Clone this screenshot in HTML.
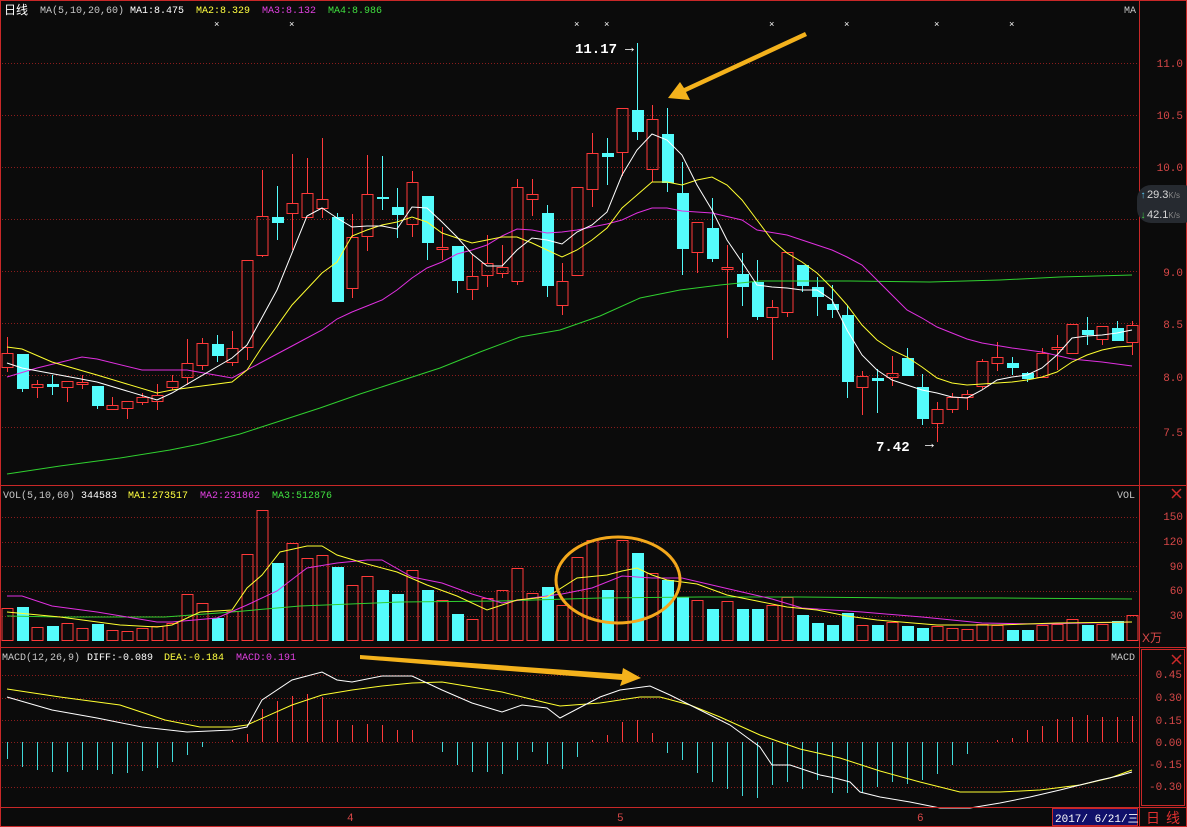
<!DOCTYPE html>
<html><head><meta charset="utf-8">
<style>
html,body{margin:0;padding:0;background:#0b0b0b;width:1187px;height:827px;overflow:hidden}
svg{display:block}
</style></head><body>
<svg id="s" width="1187" height="827" xmlns="http://www.w3.org/2000/svg" font-family="'Liberation Mono','Noto Sans CJK SC',monospace" font-size="10">
<rect x="0" y="0" width="1187" height="827" fill="#0b0b0b"/>
<g id="grid"></g>
<g id="content"></g>
<g stroke="#c82828" stroke-width="1" fill="none">
<rect x="0.5" y="0.5" width="1186" height="826"/>
<line x1="0" y1="485.5" x2="1187" y2="485.5"/>
<line x1="0" y1="647.5" x2="1187" y2="647.5"/>
<line x1="0" y1="807.5" x2="1187" y2="807.5"/>
<line x1="1139.5" y1="0" x2="1139.5" y2="827"/>
<rect x="1141.5" y="649.5" width="43" height="156"/>
</g>
<g fill="#cc2a2a" stroke="#cc2a2a" stroke-width="1.5">
<line x1="1172" y1="489" x2="1181" y2="498"/><line x1="1181" y1="489" x2="1172" y2="498"/>
<line x1="1172" y1="655" x2="1181" y2="664"/><line x1="1181" y1="655" x2="1172" y2="664"/>
</g>
<text x="4" y="14" fill="#fff" font-family="'Noto Sans CJK SC',sans-serif" font-size="12">日线</text>
<text x="40" y="13" fill="#c8c8c8">MA(5,10,20,60)</text>
<text x="130" y="13" fill="#fff">MA1:8.475</text>
<text x="196" y="13" fill="#ffff40">MA2:8.329</text>
<text x="262" y="13" fill="#e040e0">MA3:8.132</text>
<text x="328" y="13" fill="#40e040">MA4:8.986</text>
<text x="1124" y="13" fill="#c8c8c8">MA</text>
<text x="3" y="498" fill="#c8c8c8">VOL(5,10,60)</text>
<text x="81" y="498" fill="#fff">344583</text>
<text x="128" y="498" fill="#ffff40">MA1:273517</text>
<text x="200" y="498" fill="#e040e0">MA2:231862</text>
<text x="272" y="498" fill="#40e040">MA3:512876</text>
<text x="1117" y="498" fill="#c8c8c8">VOL</text>
<text x="2" y="660" fill="#c8c8c8">MACD(12,26,9)</text>
<text x="87" y="660" fill="#fff">DIFF:-0.089</text>
<text x="164" y="660" fill="#ffff40">DEA:-0.184</text>
<text x="236" y="660" fill="#e040e0">MACD:0.191</text>
<text x="1111" y="660" fill="#c8c8c8">MACD</text>
<g fill="#fff" font-size="9"><text x="214" y="27">×</text><text x="289" y="27">×</text><text x="574" y="27">×</text><text x="604" y="27">×</text><text x="769" y="27">×</text><text x="844" y="27">×</text><text x="934" y="27">×</text><text x="1009" y="27">×</text></g>
<g fill="#d84848" font-size="11" text-anchor="end">
<text x="1183" y="67">11.0</text><text x="1183" y="119">10.5</text><text x="1183" y="171">10.0</text>
<text x="1183" y="276">9.0</text><text x="1183" y="328">8.5</text><text x="1183" y="381">8.0</text><text x="1183" y="436">7.5</text>
<text x="1183" y="520">150</text><text x="1183" y="545">120</text><text x="1183" y="570">90</text><text x="1183" y="594">60</text><text x="1183" y="619">30</text>
<text x="1182" y="678">0.45</text><text x="1182" y="701">0.30</text><text x="1182" y="724">0.15</text><text x="1182" y="746">0.00</text><text x="1182" y="768">-0.15</text><text x="1182" y="790">-0.30</text>
</g>
<text x="1142" y="642" fill="#d84848" font-family="'Liberation Sans','Noto Sans CJK SC',sans-serif" font-size="12">X万</text>
<g fill="#d84848" font-size="11"><text x="347" y="821">4</text><text x="617" y="821">5</text><text x="917" y="821">6</text></g>
<rect x="1052.5" y="808.5" width="85" height="17" fill="#10106a" stroke="#c82828"/>
<text x="1055" y="822" fill="#fff" font-size="11">2017/ 6/21/三</text>
<text x="1146" y="823" fill="#e03030" font-family="'Noto Sans CJK SC',sans-serif" font-size="14" letter-spacing="6">日线</text>
<rect x="1137" y="185" width="60" height="38" rx="14" fill="#262a30"/>
<text x="1147" y="198" fill="#d8d8d8" font-size="11" font-family="'Liberation Sans',sans-serif">29.3<tspan font-size="8" fill="#888">K/s</tspan></text>
<text x="1147" y="218" fill="#d8d8d8" font-size="11" font-family="'Liberation Sans',sans-serif">42.1<tspan font-size="8" fill="#888">K/s</tspan></text>
<text x="1140" y="198" fill="#5ac8f0" font-size="10">↑</text>
<text x="1140" y="218" fill="#40d040" font-size="10">↓</text>
<text x="575" y="53" fill="#fff" font-size="14" font-weight="bold">11.17</text>
<text x="625" y="52" fill="#fff" font-size="15">→</text>
<text x="876" y="451" fill="#fff" font-size="14" font-weight="bold">7.42</text>
<text x="925" y="448" fill="#fff" font-size="15">→</text>
<g id="ann"></g>
</svg>
<script>
var NS="http://www.w3.org/2000/svg";
function el(p,t,a){var e=document.createElementNS(NS,t);for(var k in a)e.setAttribute(k,a[k]);document.getElementById(p).appendChild(e);return e;}
[63,115,167,219,271,323,375,427,517,542,566,591,616,675,698,720,742,765,787].forEach(function(y){
 el("grid","line",{x1:2,x2:1138,y1:y+.5,y2:y+.5,stroke:"#8a1c1c","stroke-dasharray":"1,2"});});
var C=[[1,353,367,337,372],[0,354,389,354,392],[1,384,387,380,398],[0,384,387,375,395],[1,381,387,381,402],[1,382,384,375,389],[0,386,406,386,409],[1,405,409,397,410],[1,401,408,401,419],[1,397,402,393,405],[1,395,401,384,410],[1,381,387,375,390],[1,363,377,339,385],[1,343,365,338,370],[0,344,356,335,362],[1,348,362,331,366],[1,260,347,260,360],[1,216,255,170,257],[0,217,223,186,240],[1,203,213,154,250],[1,193,217,158,217],[1,199,208,138,218],[0,217,302,213,302],[1,237,288,214,298],[1,194,236,155,251],[0,197,199,156,210],[0,207,215,188,238],[1,182,224,171,237],[0,196,243,196,260],[1,247,249,227,260],[0,246,281,246,293],[1,276,289,255,300],[1,263,275,235,287],[1,267,273,245,278],[1,187,281,179,285],[1,194,199,179,216],[0,213,286,205,297],[1,281,305,263,315],[1,187,275,187,275],[1,153,189,133,207],[0,153,157,138,185],[1,108,152,108,176],[0,110,132,43,140],[1,119,169,105,182],[0,134,183,108,192],[0,193,249,162,275],[1,222,252,222,273],[0,228,259,198,262],[1,267,269,245,338],[0,274,287,253,306],[0,282,317,260,320],[1,307,317,300,360],[1,252,312,252,317],[0,265,286,265,292],[0,287,297,277,316],[0,304,310,285,318],[0,315,382,305,398],[1,376,387,371,415],[0,378,381,369,413],[1,373,377,356,386],[0,358,376,348,376],[0,387,419,374,425],[1,409,423,402,442],[1,397,409,393,413],[1,394,397,390,410],[1,361,386,359,389],[1,357,363,342,371],[0,363,368,357,375],[0,373,379,372,382],[1,353,377,348,377],[1,347,349,335,370],[1,324,353,324,353],[0,330,335,317,345],[1,326,339,326,345],[0,328,341,321,341],[1,325,342,321,355]];
var RED="#ff3a3a",CY="#54fcfc";
C.forEach(function(c,i){var x=7+15*i;var col=c[0]?RED:CY;
 if(c[0]){
  el("content","line",{x1:x+.5,x2:x+.5,y1:c[3],y2:c[1],stroke:col});
  el("content","line",{x1:x+.5,x2:x+.5,y1:c[2],y2:c[4],stroke:col});
  el("content","rect",{x:x-5,y:c[1]+.5,width:11,height:Math.max(c[2]-c[1],1),fill:"none",stroke:col});
 } else {
  el("content","line",{x1:x+.5,x2:x+.5,y1:c[3],y2:c[4],stroke:col});
  el("content","rect",{x:x-5,y:c[1],width:12,height:Math.max(c[2]-c[1],2),fill:col});
 }});
function pl(pts,col){el("content","polyline",{points:pts,fill:"none",stroke:col,"stroke-width":1});}
pl("7,474 60,466 120,458 170,450 200,444 240,434 280,421 320,408 360,394 400,381 440,368 480,352 520,337 560,330 600,316 640,298 680,290 720,285 760,281 800,281 850,281 930,282 1000,280 1060,277 1132,275","#30d030");
pl("7,377 37,368 82,357 97,359 142,370 187,370 232,378 262,362 292,346 322,330 337,319 352,312 367,306 382,300 397,290 412,278 427,268 442,262 457,254 472,250 487,245 502,236 517,229 532,230 547,233 562,232 577,230 592,227 607,224 622,220 637,213 652,208 667,208 682,211 712,213 742,220 757,230 787,235 802,240 817,245 832,250 847,257 862,265 877,280 892,295 907,310 922,318 937,327 952,333 967,339 982,343 1012,348 1042,352 1072,359 1102,362 1132,366","#e030e0");
pl("7,347 22,349 52,362 97,375 157,393 172,390 232,382 247,370 262,347 292,305 322,273 337,262 352,236 367,230 382,225 397,222 412,217 427,222 442,233 457,238 472,243 487,240 502,237 517,237 532,243 547,250 562,257 577,250 592,240 607,228 622,208 637,195 652,182 667,182 682,185 697,180 712,177 727,185 742,200 757,220 772,240 787,253 802,262 817,273 832,288 847,305 862,325 877,340 892,350 907,357 922,367 937,378 952,383 967,385 982,384 997,383 1012,382 1027,380 1042,377 1057,372 1072,362 1087,355 1102,350 1117,347 1132,346","#ffff30");
pl("7,363 22,368 97,382 157,400 172,393 232,358 247,345 277,290 307,216 322,208 337,218 352,227 367,226 382,226 397,229 412,207 427,208 442,222 457,237 472,254 487,266 502,266 517,250 532,238 547,240 562,244 577,232 592,225 607,212 622,175 637,150 652,134 667,140 682,155 697,185 712,210 727,240 742,262 757,285 772,287 787,288 802,290 817,290 832,300 847,330 862,355 877,370 892,380 907,385 922,390 937,393 952,397 967,398 982,390 997,380 1012,377 1027,375 1042,368 1057,355 1072,338 1087,336 1102,335 1117,333 1132,330","#ffffff");
var V=[608,607,627,626,623,628,624,630,631,628,626,623,594,603,618,611,554,510,563,543,558,555,567,585,576,590,594,570,590,600,614,619,598,590,568,593,587,605,557,540,590,540,553,573,580,597,600,609,601,609,609,605,597,615,623,625,613,625,625,622,626,628,626,628,629,624,625,630,630,625,624,619,625,624,621,615];
V.forEach(function(t,i){var x=7+15*i;var red=C[i][0];
 if(red) el("content","rect",{x:x-5,y:t+.5,width:11,height:640-t,fill:"none",stroke:RED});
 else el("content","rect",{x:x-5,y:t,width:12,height:641-t,fill:CY});});
pl("7,616 60,617 165,617 232,612 300,606 400,602 500,601 600,598 700,597 800,597 900,598 1000,598 1132,599","#30d030");
pl("7,596 22,596 52,606 97,612 157,622 172,622 217,618 247,605 277,591 307,568 337,563 367,560 382,560 412,577 442,583 472,594 502,603 532,598 562,594 592,588 622,576 652,578 682,578 712,585 742,592 772,599 802,608 862,612 922,617 982,623 1042,624 1132,622","#e030e0");
pl("7,612 60,617 120,625 157,627 172,625 200,612 232,610 247,588 262,575 280,552 307,546 322,546 337,555 367,564 397,572 427,585 457,596 487,610 517,600 547,597 577,578 607,575 622,571 637,568 652,575 667,580 697,584 727,595 757,601 787,607 817,610 847,616 877,620 937,625 997,625 1057,623 1132,622","#ffff30");
var M=[759,767,770,772,772,770,770,774,773,771,768,762,755,747,742,740,734,709,701,696,694,697,720,725,724,725,730,730,742,752,765,772,772,774,760,752,764,769,757,740,735,722,720,733,753,760,773,782,789,796,798,785,782,789,780,793,793,793,787,782,784,780,774,765,754,742,740,738,730,726,719,717,715,717,717,716];
M.forEach(function(t,i){var x=7+15*i+.5;if(Math.abs(t-742)<1)return;
 el("content","line",{x1:x,x2:x,y1:742,y2:t,stroke:t<742?RED:"#40d8d8"});});
pl("7,689 60,697 120,705 165,720 200,727 232,727 247,725 292,705 322,695 352,690 382,686 412,683 442,682 472,687 502,692 547,703 560,706 600,703 640,697 660,697 690,705 720,717 760,735 800,749 840,758 880,771 920,782 960,792 1000,792 1040,790 1080,785 1110,778 1132,770","#ffff30");
pl("7,697 52,710 97,718 142,727 187,732 232,730 247,727 262,700 292,680 322,672 337,680 352,682 382,676 412,676 442,690 472,703 502,712 522,705 547,708 560,718 600,697 620,690 650,686 670,695 700,710 730,725 760,747 772,765 790,765 820,775 835,778 850,782 860,792 880,797 910,802 940,808 970,808 1000,803 1030,797 1060,790 1080,785 1100,780 1118,776 1132,772","#ffffff");
el("ann","ellipse",{cx:618,cy:580,rx:62,ry:43,fill:"none",stroke:"#f4a81c","stroke-width":3});
el("ann","polygon",{points:"805,32 807,36 686,92 690,100 668,98 680,82 684,88",fill:"#f4b21c"});
el("ann","polygon",{points:"360,655 360,659 622,680 620,686 641,678 623,668 622,674",fill:"#f4b21c"});
</script>
</body></html>
